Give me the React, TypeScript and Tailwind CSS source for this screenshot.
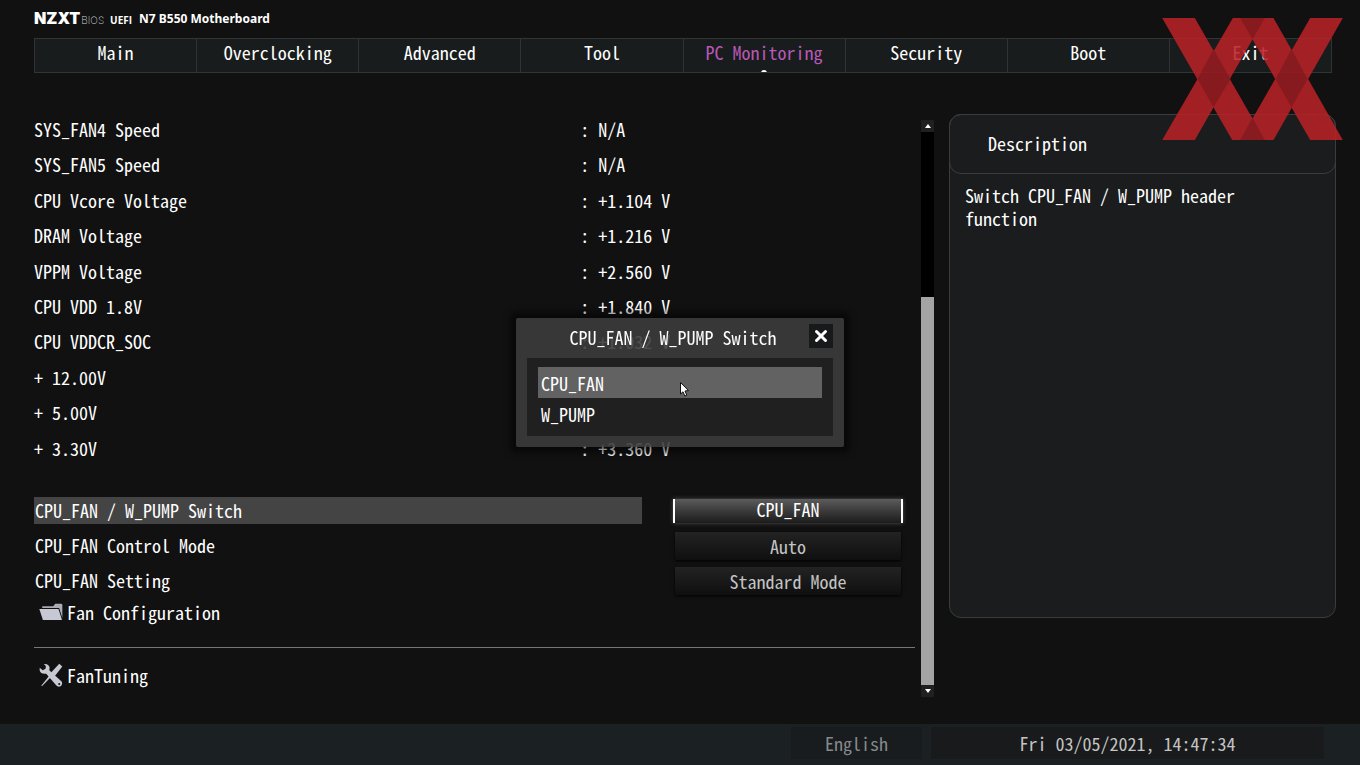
import { useState } from "react";
import { X } from "lucide-react";

const tabs = ["Main", "Overclocking", "Advanced", "Tool", "PC Monitoring", "Security", "Boot", "Exit"];

const readings = [
  { label: "SYS_FAN4 Speed", value: "N/A" },
  { label: "SYS_FAN5 Speed", value: "N/A" },
  { label: "CPU Vcore Voltage", value: "+1.104 V" },
  { label: "DRAM Voltage", value: "+1.216 V" },
  { label: "VPPM Voltage", value: "+2.560 V" },
  { label: "CPU VDD 1.8V", value: "+1.840 V" },
  { label: "CPU VDDCR_SOC", value: "+1.032 V" },
  { label: "+ 12.00V", value: "" },
  { label: "+ 5.00V", value: "" },
  { label: "+ 3.30V", value: "+3.360 V" },
];

const options = ["CPU_FAN", "W_PUMP"];

function Header() {
  return (
    <header className="flex h-[38px] items-center pb-[2px] pl-[34px] text-white">
      <span className="font-['Inter'] text-[16px] font-black">NZXT</span>
      <span className="mt-1 ml-px font-['Inter'] text-[10px] font-extralight text-gray-300">BIOS</span>
      <span className="mt-1 ml-[6px] font-['Open_Sans'] text-[10px] font-bold">UEFI</span>
      <h1 className="mt-[2px] ml-[7px] font-['Noto_Sans'] text-[12px] font-bold">N7 B550 Motherboard</h1>
    </header>
  );
}

function Tabs() {
  return (
    <nav className="mr-7 ml-[34px] grid h-[35px] grid-cols-8 border-y border-l border-[#303434] bg-[#181c1c]">
      {tabs.map((tab) => (
        <a
          key={tab}
          href="#"
          className={`relative flex items-center justify-center overflow-hidden border-r border-[#303434] pb-2 ${
            tab === "PC Monitoring" ? "text-[#b858b8]" : "text-white"
          }`}
        >
          {tab}
          {tab === "PC Monitoring" && (
            <span className="absolute -bottom-1 left-1/2 h-[6px] w-[6px] -translate-x-1/2 rounded-full bg-white" />
          )}
        </a>
      ))}
    </nav>
  );
}

function FolderIcon() {
  return (
    <svg viewBox="56 375 74 53" className="h-[18px] w-6" aria-hidden="true">
      <path d="M66 384 L100 384 L106 376 L124 376 Q128 376 128 380 L128 420 L118 389 L66 389 Z" fill="#a9abb6" />
      <path d="M57 392 L116 392 L127 426 L68 426 Z" fill="#c6c8d3" />
    </svg>
  );
}

function ToolsIcon() {
  return (
    <svg viewBox="56 552 70 70" className="h-6 w-6" aria-hidden="true">
      <path d="M62 619 L88 586 L93 591 L66 618 Z" fill="#c6c8d3" />
      <path d="M115 554 L124 562 L104 588 Q97 594 91 588 Q88 582 94 577 Z" fill="#c6c8d3" />
      <path
        d="M70 555 Q84 553 87 565 L86 573 L122 606 Q126 615 119 620 Q111 623 106 617 L77 583 Q62 586 58 574 L58 566 L67 573 L75 569 L76 561 Z"
        fill="#c6c8d3"
      />
      <circle cx="115" cy="613" r="3" fill="#111111" />
    </svg>
  );
}

function Setting({ label, value, active }: { label: string; value: string; active?: boolean }) {
  return (
    <div className="flex h-[35px] items-center justify-between pr-3">
      <span className={`flex h-[27px] w-[70%] items-center pb-[2px] pl-px text-white ${active ? "bg-[#444444]" : ""}`}>
        {label}
      </span>
      <button
        type="button"
        aria-label={`${label}: ${value}`}
        className={
          active
            ? "h-6 w-[230px] border-x-2 border-white bg-linear-to-b from-[#5c5c5c] to-[#1c1c1c] text-white shadow-[0_0_4px_#555555]"
            : "mx-[2px] h-7 w-[226px] bg-linear-to-b from-[#232323] to-[#0f0f0f] text-[#c4c4c4] shadow-[0_1px_3px_#000000]"
        }
      >
        <span className={active ? "block pb-1 leading-5" : "block"}>{value}</span>
      </button>
    </div>
  );
}

function ScrollBar() {
  return (
    <div className="mt-[6px] ml-[6px] flex w-[13px] flex-col bg-black">
      <button type="button" aria-label="Scroll up" className="flex h-3 items-center justify-center bg-[#202020]">
        <svg viewBox="0 0 6 4" className="h-1 w-[6px]">
          <path d="M3 0 L6 4 L0 4 Z" fill="#ffffff" />
        </svg>
      </button>
      <div className="h-[165px]" />
      <div className="flex-1 bg-[#a4a4a4]" />
      <button type="button" aria-label="Scroll down" className="flex h-3 items-center justify-center bg-[#202020]">
        <svg viewBox="0 0 6 4" className="h-1 w-[6px]">
          <path d="M0 0 L6 0 L3 4 Z" fill="#ffffff" />
        </svg>
      </button>
    </div>
  );
}

function Description() {
  return (
    <aside className="ml-[15px] h-[504px] w-[387px] shrink-0 rounded-xl border border-[#3a3d3f] bg-[#1a1c1d] text-white">
      <h2 className="-mx-px -mt-px flex h-[60px] items-center rounded-xl border border-[#3a3d3f] pb-[2px] pl-[38px]">
        Description
      </h2>
      <p className="pt-[10px] pr-10 pl-[15px] leading-[23px]">Switch CPU_FAN / W_PUMP header function</p>
    </aside>
  );
}

function SwitchDialog({ onClose }: { onClose: () => void }) {
  return (
    <div className="fixed inset-0 flex items-center justify-center">
      <div
        role="dialog"
        aria-labelledby="dialog-title"
        className="relative w-[328px] rounded-xs bg-[#3c3c3c]/90 px-[11px] pb-[11px] text-white shadow-[0_0_6px_6px_rgba(0,0,0,0.5)]"
      >
        <div className="relative flex h-10 items-center justify-center">
          <h2 id="dialog-title" className="pr-[14px] pb-[3px]">
            CPU_FAN / W_PUMP Switch
          </h2>
          <button
            type="button"
            aria-label="Close"
            onClick={onClose}
            className="absolute top-[6px] right-0 flex h-6 w-6 items-center justify-center bg-[#17191b]"
          >
            <X size={18} strokeWidth={4} />
          </button>
        </div>
        <div className="bg-[#202020] px-[11px] pt-[9px] pb-[7px]">
          {options.map((option) => (
            <button
              key={option}
              type="button"
              className={`block h-[31px] w-full pl-[3px] text-left ${option === "CPU_FAN" ? "bg-[#626262]" : ""}`}
            >
              {option}
            </button>
          ))}
        </div>
        <svg viewBox="0 0 9 15" className="absolute top-16 left-1/2 h-[15px] w-[9px]" aria-hidden="true">
          <path d="M0.5 0.5 L0.5 12 L3 9.8 L4.8 14 L6.8 13.2 L5 9 L8.5 8.6 Z" fill="#ffffff" stroke="#111111" />
        </svg>
      </div>
    </div>
  );
}

function Watermark() {
  return (
    <svg
      viewBox="67 54 542 366"
      className="pointer-events-none absolute top-[18px] right-[17px] h-[122px] w-[181px] opacity-88"
      aria-hidden="true"
    >
      <g fill="#b72127">
        <path d="M67 54 H165 L375 420 H277 Z" />
        <path d="M279 54 H375 L165 420 H67 Z" />
        <path d="M301 54 H401 L609 420 H511 Z" />
        <path d="M511 54 H609 L401 420 H301 Z" />
      </g>
      <g fill="#981c20">
        <path d="M221 148 L272 237 L221 322 L173 237 Z" />
        <path d="M455 148 L503 237 L455 322 L407 237 Z" />
        <path d="M301 54 H375 L338 118 Z" />
        <path d="M301 420 H375 L338 354 Z" />
      </g>
    </svg>
  );
}

export default function App() {
  const [open, setOpen] = useState(true);

  return (
    <div className="relative flex min-h-screen flex-col bg-[#111111] font-['Noto_Sans_Mono_CJK_JP','Liberation_Mono',monospace] text-[18px] leading-6">
      <Header />
      <Tabs />

      <main className="flex flex-1 items-start pt-[41px] pr-6 pl-[34px]">
        <div className="flex flex-1">
          <div className="flex-1 pt-[3px] pb-[10px]">
            <dl className="grid h-[354px] grid-rows-10 text-white">
              {readings.map((row) => (
                <div key={row.label} className="flex">
                  <dt className="w-[62%]">{row.label}</dt>
                  <dd>{row.value && `: ${row.value}`}</dd>
                </div>
              ))}
            </dl>

            <div className="mt-[22px]">
              <Setting label="CPU_FAN / W_PUMP Switch" value="CPU_FAN" active />
              <Setting label="CPU_FAN Control Mode" value="Auto" />
              <Setting label="CPU_FAN Setting" value="Standard Mode" />
            </div>

            <a href="#" className="flex h-7 items-center gap-1 pl-[5px] text-white">
              <FolderIcon />
              Fan Configuration
            </a>
            <hr className="mt-[21px] border-[#777777]" />
            <a href="#" className="mt-[15px] flex h-6 items-center gap-1 pl-[5px] text-white">
              <ToolsIcon />
              FanTuning
            </a>
          </div>
          <ScrollBar />
        </div>
        <Description />
      </main>

      <footer className="flex h-[41px] justify-end gap-[9px] bg-[#1b2022] pt-[3px] pr-9 pb-[6px]">
        <button type="button" className="w-[131px] bg-[#181c1f] text-[#85898b]">
          English
        </button>
        <time className="flex w-[393px] items-center justify-center bg-[#191a1b] text-[#c4c4c4]">
          Fri 03/05/2021, 14:47:34
        </time>
      </footer>

      {open && <SwitchDialog onClose={() => setOpen(false)} />}
      <Watermark />
    </div>
  );
}
